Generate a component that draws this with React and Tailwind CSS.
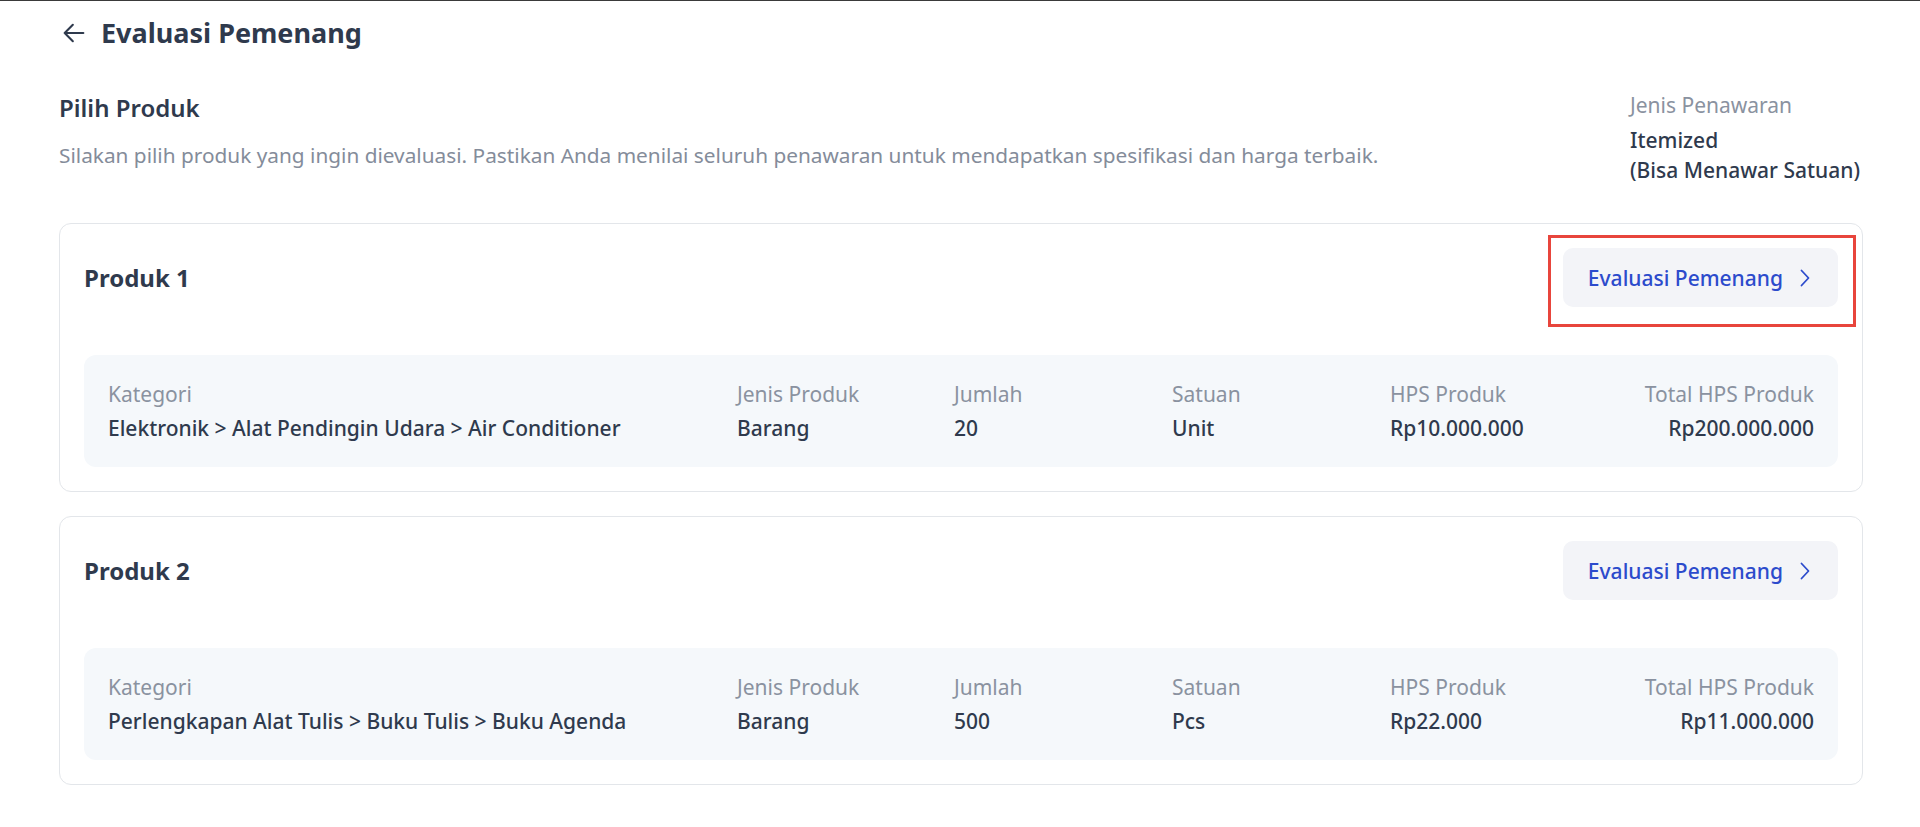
import React from 'react';

const products = [
  {
    id: 1,
    kategori: 'Elektronik > Alat Pendingin Udara > Air Conditioner',
    jenis: 'Barang',
    jumlah: '20',
    satuan: 'Unit',
    hps: 'Rp10.000.000',
    total: 'Rp200.000.000',
    highlighted: true,
  },
  {
    id: 2,
    kategori: 'Perlengkapan Alat Tulis > Buku Tulis > Buku Agenda',
    jenis: 'Barang',
    jumlah: '500',
    satuan: 'Pcs',
    hps: 'Rp22.000',
    total: 'Rp11.000.000',
    highlighted: false,
  },
];

const InfoItem = ({ label, value, right }) => (
  <div className={`flex flex-col gap-1 ${right ? 'items-end text-right' : ''}`}>
    <span className="text-[21px] leading-[30px] text-[#8a92a0]">{label}</span>
    <span className="text-[21px] leading-[30px] font-medium text-[#2f3a4d]">{value}</span>
  </div>
);

const ProductCard = ({ product }) => {
  return (
    <div className="border border-[#e3e6ea] rounded-xl bg-white p-6">
      {/* Header: product name + action */}
      <div className="flex items-center justify-between">
        <h2 className="text-2xl leading-8 font-bold text-[#2f3a4d]">Produk {product.id}</h2>
        <div className="relative">
          <button className="h-[59px] flex items-center gap-[17px] pl-[25px] pr-[28px] bg-[#f3f4f8] rounded-[10px] text-[21px] leading-[30px] font-medium text-[#2c4bcc]">
            Evaluasi Pemenang
            <svg width="10" height="18" viewBox="0 0 10 18" fill="none" stroke="currentColor" strokeWidth="1.8" strokeLinecap="round" strokeLinejoin="round">
              <path d="M1.5 1.5 8.5 9l-7 7.5" />
            </svg>
          </button>
          {product.highlighted && (
            <div className="absolute -left-[15px] -right-[18px] -top-[13px] -bottom-[20px] border-[3px] border-[#e8453c] pointer-events-none" />
          )}
        </div>
      </div>

      {/* Detail row */}
      <div className="mt-[48px] bg-[#f5f8fb] rounded-xl p-6 grid grid-cols-[629px_217px_218px_218px_1fr_1fr]">
        <InfoItem label="Kategori" value={product.kategori} />
        <InfoItem label="Jenis Produk" value={product.jenis} />
        <InfoItem label="Jumlah" value={product.jumlah} />
        <InfoItem label="Satuan" value={product.satuan} />
        <InfoItem label="HPS Produk" value={product.hps} />
        <InfoItem label="Total HPS Produk" value={product.total} right />
      </div>
    </div>
  );
};

export default function App() {
  return (
    <div className="min-h-screen bg-white border-t border-[#3a3a3a] font-['Noto_Sans',sans-serif]">
      <div className="pl-[59px] pr-[57px] pt-[14px] pb-12">
        {/* Page title */}
        <div className="flex items-center gap-[13px]">
          <button className="text-[#2f3a4d] ml-[1px]">
            <svg width="28" height="28" viewBox="0 0 24 24" fill="none" stroke="currentColor" strokeWidth="1.8" strokeLinecap="round" strokeLinejoin="round">
              <path d="M20 12H4M11 5l-7 7 7 7" />
            </svg>
          </button>
          <h1 className="text-[27px] leading-9 font-bold text-[#2f3a4d]">Evaluasi Pemenang</h1>
        </div>

        {/* Intro + offer type */}
        <div className="mt-[39px] flex items-start justify-between">
          <div className="pt-[2px]">
            <h3 className="text-2xl leading-8 font-semibold text-[#2f3a4d]">Pilih Produk</h3>
            <p className="mt-4 text-[20.8px] leading-[30px] text-[#848c9a]">
              Silakan pilih produk yang ingin dievaluasi. Pastikan Anda menilai seluruh penawaran untuk mendapatkan spesifikasi dan harga terbaik.
            </p>
          </div>
          <div className="w-[233px] flex flex-col gap-[5px]">
            <span className="text-[21px] leading-[30px] text-[#8a92a0]">Jenis Penawaran</span>
            <span className="text-[21px] leading-[30px] font-medium text-[#2f3a4d]">
              Itemized
              <br />
              (Bisa Menawar Satuan)
            </span>
          </div>
        </div>

        {/* Product list */}
        <div className="mt-[38px] flex flex-col gap-6">
          {products.map((p) => (
            <ProductCard key={p.id} product={p} />
          ))}
        </div>
      </div>
    </div>
  );
}
